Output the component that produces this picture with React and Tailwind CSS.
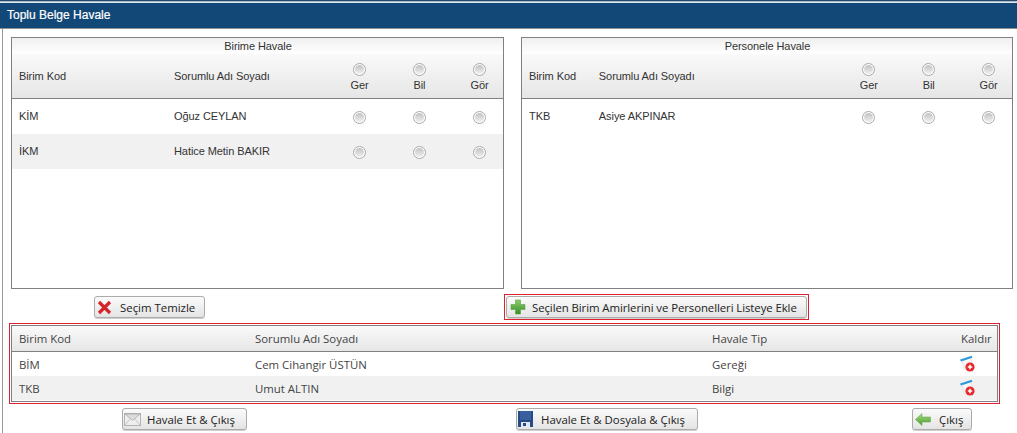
const SEGOE = "font-['Open_Sans','Noto_Sans',sans-serif]";

const BIRIM_ROWS = [
    { kod: "KİM", ad: "Oğuz CEYLAN" },
    { kod: "İKM", ad: "Hatice Metin BAKIR" },
];
const PERSONEL_ROWS = [{ kod: "TKB", ad: "Asiye AKPINAR" }];
const LISTE = [
    { kod: "BİM", ad: "Cem Cihangir ÜSTÜN", tip: "Gereği" },
    { kod: "TKB", ad: "Umut ALTIN", tip: "Bilgi" },
];

function Radio() {
    return (
        <span className="block w-[13px] h-[13px] rounded-full border border-[#a8a8a8] bg-white p-px">
            <span className="block w-full h-full rounded-full bg-gradient-to-b from-[#c2c2c2] to-[#f0f0f0]" />
        </span>
    );
}

function RadioCell({ label }) {
    return (
        <div className={`w-[48px] mr-[12px] last:mr-0 flex flex-col items-center ${label ? "mt-[3px]" : "mt-[2px]"}`}>
            <Radio />
            {label && <span className="mt-[3px] pl-px leading-[13px]">{label}</span>}
        </div>
    );
}

function HavalePanel({ title, col1, col2, rows }) {
    return (
        <div className="h-[252px] border border-[#808080] text-[11px] tracking-[-0.08px] text-[#333] font-['Liberation_Sans',sans-serif] overflow-hidden">
            <div className="h-[16px] leading-[16px] text-center pl-px bg-gradient-to-b from-[#f0f0f0] to-white">{title}</div>
            <div className="h-[44px] flex items-center pl-[7px] bg-gradient-to-b from-[#fafafa] to-[#e6e6e6] border-b border-[#808080] box-content">
                <div className={col1}>Birim Kod</div>
                <div className={col2}>Sorumlu Adı Soyadı</div>
                <RadioCell label="Ger" />
                <RadioCell label="Bil" />
                <RadioCell label="Gör" />
            </div>
            {rows.map((r, i) => (
                <div key={r.kod} className={`h-[35px] flex items-center pl-[7px] ${i % 2 ? "bg-[#f1f1f1]" : "bg-white"}`}>
                    <div className={col1}>{r.kod}</div>
                    <div className={col2}>{r.ad}</div>
                    <RadioCell />
                    <RadioCell />
                    <RadioCell />
                </div>
            ))}
        </div>
    );
}

function CrossIcon() {
    return (
        <svg width="15" height="15" viewBox="0 0 15 15">
            <path d="M2 2 L13 13 M13 2 L2 13" stroke="#d3262b" strokeWidth="3.2" fill="none" />
        </svg>
    );
}

function PlusIcon() {
    return (
        <svg width="16" height="16" viewBox="0 0 16 16">
            <defs>
                <linearGradient id="plusFill" x1="0" y1="0" x2="0" y2="1">
                    <stop offset="0" stopColor="#8ccc6a" />
                    <stop offset="1" stopColor="#3a8f2c" />
                </linearGradient>
            </defs>
            <path d="M5.5 1 H10.5 V5.5 H15 V10.5 H10.5 V15 H5.5 V10.5 H1 V5.5 H5.5 Z" fill="url(#plusFill)" stroke="#4a9a38" strokeWidth="0.5" />
        </svg>
    );
}

function MailIcon() {
    return (
        <svg width="17" height="13" viewBox="0 0 17 13">
            <rect x="0.5" y="0.5" width="16" height="12" fill="#eeeeee" stroke="#b4b4b4" />
            <path d="M1 1 L8.5 7.5 L16 1 Z" fill="#dcdcdc" stroke="#a8a8a8" strokeWidth="0.8" />
            <path d="M1 12 L6 6 M16 12 L11 6" fill="none" stroke="#c4c4c4" />
        </svg>
    );
}

function SaveIcon() {
    return (
        <svg width="15" height="16" viewBox="0 0 15 16">
            <rect width="15" height="16" fill="#284a86" />
            <rect x="2" y="0" width="11" height="9" fill="#3a5f9e" />
            <rect x="3" y="11" width="9" height="5" fill="#e4e8ee" />
            <rect x="5" y="12" width="3" height="3" fill="#284a86" />
        </svg>
    );
}

function BackIcon() {
    return (
        <svg width="16" height="13" viewBox="0 0 16 13">
            <defs>
                <linearGradient id="backFill" x1="0" y1="0" x2="0" y2="1">
                    <stop offset="0" stopColor="#a6dc82" />
                    <stop offset="1" stopColor="#4b9a34" />
                </linearGradient>
            </defs>
            <path d="M7 0.5 L0.5 6.5 L7 12.5 V9 H15.5 V4 H7 Z" fill="url(#backFill)" stroke="#5aa53f" strokeWidth="0.5" />
        </svg>
    );
}

function RemoveIcon() {
    return (
        <svg width="16" height="17" viewBox="0 0 16 17">
            <path d="M1.5 5 L11 2 L12.5 9 L7 14.5 L4.5 13.5 Z" fill="#f6f6f6" stroke="#dcdcdc" strokeWidth="0.6" />
            <path d="M0.5 4.5 L12 0.8" stroke="#2d9ad8" strokeWidth="2.2" fill="none" />
            <circle cx="10" cy="11" r="4.6" fill="#e62a2e" />
            <path d="M7.8 11 H12.2 M10 8.8 V13.2" stroke="#fff" strokeWidth="1.5" />
        </svg>
    );
}

function Btn({ icon, children, className = "" }) {
    return (
        <button className={`h-[22px] flex items-center whitespace-nowrap border border-[#ababab] rounded-[3px] bg-gradient-to-b from-[#fbfbfb] to-[#e4e4e4] shadow-[0_1px_0_#d0d0d0] text-[11.4px] text-[#222] ${SEGOE} ${className}`}>
            {icon}
            {children}
        </button>
    );
}

export default function App() {
    return (
        <div className="w-[1017px] h-[433px] overflow-hidden bg-white flex flex-col">
            {/* Title bar */}
            <div className="h-[29px] shrink-0 border-t border-[#24496f] bg-[#124877] border-b border-b-[#8f8f8f] shadow-[inset_0_1px_0_#a9bccd,inset_0_2px_0_#dfe6ec]">
                <div className="pl-[7px] pt-[5px] text-[12px] leading-[18px] text-white font-['Liberation_Sans',sans-serif] [-webkit-text-stroke:0.2px_white]">
                    Toplu Belge Havale
                </div>
            </div>

            <div className="flex-1 ml-[2px] border-l border-[#9a9a9a] flex flex-col pt-[8px]">
                {/* Havale panels */}
                <div className="flex pl-[8px] pr-[4px] gap-[17px]">
                    <div className="w-[493px]">
                        <HavalePanel title="Birime Havale" col1="w-[155px]" col2="w-[161px]" rows={BIRIM_ROWS} />
                    </div>
                    <div className="w-[492px]">
                        <HavalePanel title="Personele Havale" col1="w-[70px]" col2="w-[246px]" rows={PERSONEL_ROWS} />
                    </div>
                </div>

                {/* Actions */}
                <div className="h-[26px] mt-[5px] flex items-center pl-[91px]">
                    <Btn className="w-[111px] pl-[2px]" icon={<CrossIcon />}>
                        <span className="ml-[8px] pt-px">Seçim Temizle</span>
                    </Btn>
                    <div className="ml-[299px] w-[305px] h-[26px] border border-[#e0202c] p-px">
                        <Btn className="w-full pl-[3px]" icon={<PlusIcon />}>
                            <span className="ml-[6px] pt-px tracking-[-0.08px]">Seçilen Birim Amirlerini ve Personelleri Listeye Ekle</span>
                        </Btn>
                    </div>
                </div>

                {/* Selected list */}
                <div className="mt-[3px] ml-[6px] w-[991px] h-[81px] border border-[#e0202c] p-px">
                    <div className={`h-full border border-[#808080] text-[11.4px] text-[#444] ${SEGOE}`}>
                        <div className="h-[26px] flex items-center pl-[7px] pt-px bg-gradient-to-b from-[#fafafa] to-[#e6e6e6] border-b border-[#808080] box-border">
                            <div className="w-[236px]">Birim Kod</div>
                            <div className="w-[457px]">Sorumlu Adı Soyadı</div>
                            <div className="w-[249px]">Havale Tip</div>
                            <div>Kaldır</div>
                        </div>
                        {LISTE.map((r, i) => (
                            <div key={r.kod} className={`h-[24px] flex items-center pl-[7px] pt-px ${i % 2 ? "bg-[#f1f1f1]" : "bg-white"}`}>
                                <div className="w-[236px]">{r.kod}</div>
                                <div className="w-[457px]">{r.ad}</div>
                                <div className="w-[249px]">{r.tip}</div>
                                <div className="-ml-px flex"><RemoveIcon /></div>
                            </div>
                        ))}
                    </div>
                </div>

                {/* Bottom buttons */}
                <div className="mt-[4px] flex pl-[119px]">
                    <Btn className="w-[125px] pl-[1px]" icon={<MailIcon />}>
                        <span className="ml-[6px] pt-px">Havale Et &amp; Çıkış</span>
                    </Btn>
                    <Btn className="ml-[269px] w-[182px] pl-[1px]" icon={<SaveIcon />}>
                        <span className="ml-[8px] pt-px">Havale Et &amp; Dosyala &amp; Çıkış</span>
                    </Btn>
                    <Btn className="ml-[214px] w-[60px] pl-[2px]" icon={<BackIcon />}>
                        <span className="ml-[8px] pt-px">Çıkış</span>
                    </Btn>
                </div>
            </div>
        </div>
    );
}
